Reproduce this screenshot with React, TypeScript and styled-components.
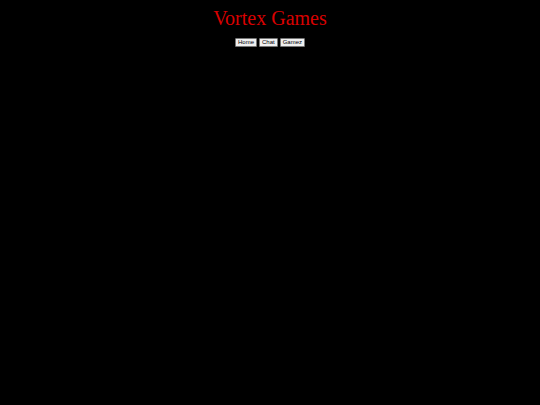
import React from "react";
import styled, { createGlobalStyle } from "styled-components";

const Global = createGlobalStyle`
  html, body { margin: 0; padding: 0; background: #000; }
  body { font-family: "Liberation Serif", serif; }
`;

const Page = styled.div`
  min-height: 405px;
  background: #000;
  display: flex;
  flex-direction: column;
  align-items: center;
`;

const Title = styled.h1`
  margin: 6px 0 0 0;
  font-family: "Liberation Serif", "Times New Roman", serif;
  font-weight: normal;
  font-size: 20px;
  line-height: 24px;
  color: #d80000;
`;

const Nav = styled.nav`
  display: flex;
  gap: 2px;
  margin-top: 8px;
`;

const NavButton = styled.button`
  font-family: "Liberation Sans", Arial, sans-serif;
  font-size: 6px;
  line-height: 7px;
  height: 9px;
  padding: 0 2px;
  background: #efefef;
  color: #000;
  border: 1px solid #767676;
  border-radius: 1px;
  cursor: pointer;
`;

export default function App() {
  return (
    <>
      <Global />
      <Page>
        <Title>Vortex Games</Title>
        <Nav>
          <NavButton>Home</NavButton>
          <NavButton>Chat</NavButton>
          <NavButton>Gamez</NavButton>
        </Nav>
      </Page>
    </>
  );
}
